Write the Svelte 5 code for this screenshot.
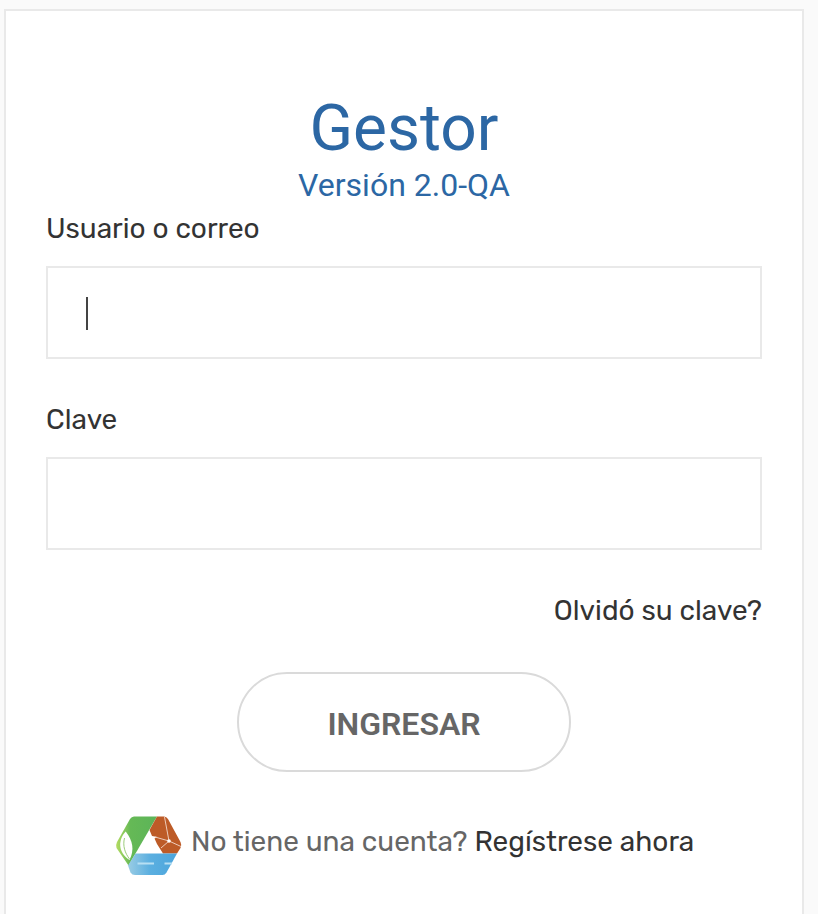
<script>
  let user = $state('');
  let password = $state('');
</script>

<main>
  <form class="card" onsubmit={(e) => e.preventDefault()}>
    <h1>Gestor</h1>
    <p class="version">Versión 2.0-QA</p>

    <label for="user">Usuario o correo</label>
    <div class="field">
      <input id="user" type="text" bind:value={user} />
      <i class="caret"></i>
    </div>

    <label for="password" class="second">Clave</label>
    <div class="field">
      <input id="password" type="password" bind:value={password} />
    </div>

    <a class="forgot" href="#forgot">Olvidó su clave?</a>

    <button type="submit">INGRESAR</button>

    <div class="register">
      <svg width="68" height="62" viewBox="0 0 68 62" aria-hidden="true">
        <defs>
          <linearGradient id="leaf" x1="0" x2="1">
            <stop offset="0" stop-color="#b5dc62" />
            <stop offset=".35" stop-color="#65b956" />
            <stop offset="1" stop-color="#5cb458" />
          </linearGradient>
          <linearGradient id="water" x1="0" x2="1">
            <stop offset="0" stop-color="#9acce4" />
            <stop offset=".45" stop-color="#5bafe0" />
            <stop offset="1" stop-color="#4ba5dc" />
          </linearGradient>
        </defs>
        <path d="M19 1.500H42L20.500 38.500L13.500 50.500L1.500 33Q.5 30 2 27L15 4Q16.500 1.500 19 1.500Z" fill="url(#leaf)" />
        <path d="M10.700 16.500C3.500 24 2 37 14.500 45C19.500 35 18 26 10.700 16.500Z" fill="#fff" />
        <path d="M9.500 23C7.500 31 10 38 14.500 44" stroke="#9ccb7b" stroke-width="1" fill="none" />
        <path d="M42 1.500H49Q51.500 1.500 53 4L65.500 27Q67 30 65.500 33L62 38.500H48L42 29L39.500 23.500L42.500 22L37 21L34.500 15Z" fill="#bd5b27" />
        <path d="M49.500 2L54 26L46 33M54 26L66 31.500M54 26L40 22" stroke="#edccbb" stroke-width="1" fill="none" />
        <circle cx="54" cy="26" r="1.800" fill="#fff" />
        <path d="M20.500 38.500H62L51.500 57.500Q50 60 47.500 60H20Q17 60 15.500 57.500L13 50.500Z" fill="url(#water)" />
        <path d="M22.500 48.500H39M49.500 48.500H57" stroke="#b7dff3" stroke-width="1.800" />
      </svg>
      <span class="question">No tiene una cuenta?</span>
      <a class="signup" href="#register">Regístrese ahora</a>
    </div>
  </form>
</main>

<style>
  :global(body) {
    margin: 0;
    background: #fafafa;
    overflow: hidden;
  }
  main {
    box-sizing: border-box;
    height: 914px;
    padding: 9px 14px 0 4px;
    overflow: hidden;
    font-family: Rubik, Roboto, 'Liberation Sans', sans-serif;
    color: #333;
  }
  .card {
    box-sizing: border-box;
    display: flex;
    flex-direction: column;
    height: 960px;
    padding: 80px 40px 0;
    background: #fff;
    border: 2px solid #e9e9e9;
  }
  h1,
  .version {
    margin: 0;
    font-family: Roboto, sans-serif;
    font-weight: 400;
    text-align: center;
    color: #2c67a4;
  }
  h1 {
    font-size: 64px;
    line-height: 76px;
  }
  .version {
    font-size: 32px;
    line-height: 36px;
  }
  label {
    box-sizing: border-box;
    height: 61px;
    padding-top: 1px;
    font-size: 28px;
    line-height: 46px;
  }
  .version + label {
    height: 63px;
    padding-top: 3px;
  }
  .second {
    margin-top: 37px;
  }
  .field {
    position: relative;
    height: 93px;
  }
  input {
    box-sizing: border-box;
    display: block;
    width: 100%;
    height: 93px;
    padding: 0 38px;
    border: 2px solid #e9e9e9;
    border-radius: 0;
    outline: none;
    background: #fff;
    font: 28px Roboto, sans-serif;
    color: #444;
  }
  .caret {
    position: absolute;
    left: 40px;
    top: 31px;
    width: 2px;
    height: 33px;
    background: #444;
  }
  a {
    color: #333;
    text-decoration: none;
  }
  .forgot {
    align-self: flex-end;
    margin-top: 38px;
    font-size: 28px;
    line-height: 46px;
  }
  button {
    align-self: center;
    box-sizing: border-box;
    width: 334px;
    height: 100px;
    margin-top: 38px;
    padding: 3px 0 0;
    border: 2px solid #dadada;
    border-radius: 50px;
    background: #fff;
    font: 600 32px Roboto, sans-serif;
    color: #666;
  }
  .register {
    display: flex;
    margin: 43px 0 0 69px;
    font-size: 28px;
    line-height: 54px;
    white-space: nowrap;
  }
  svg {
    flex: none;
  }
  .question {
    margin-left: 8px;
    color: #666;
  }
  .signup {
    margin-left: 7px;
  }
</style>
